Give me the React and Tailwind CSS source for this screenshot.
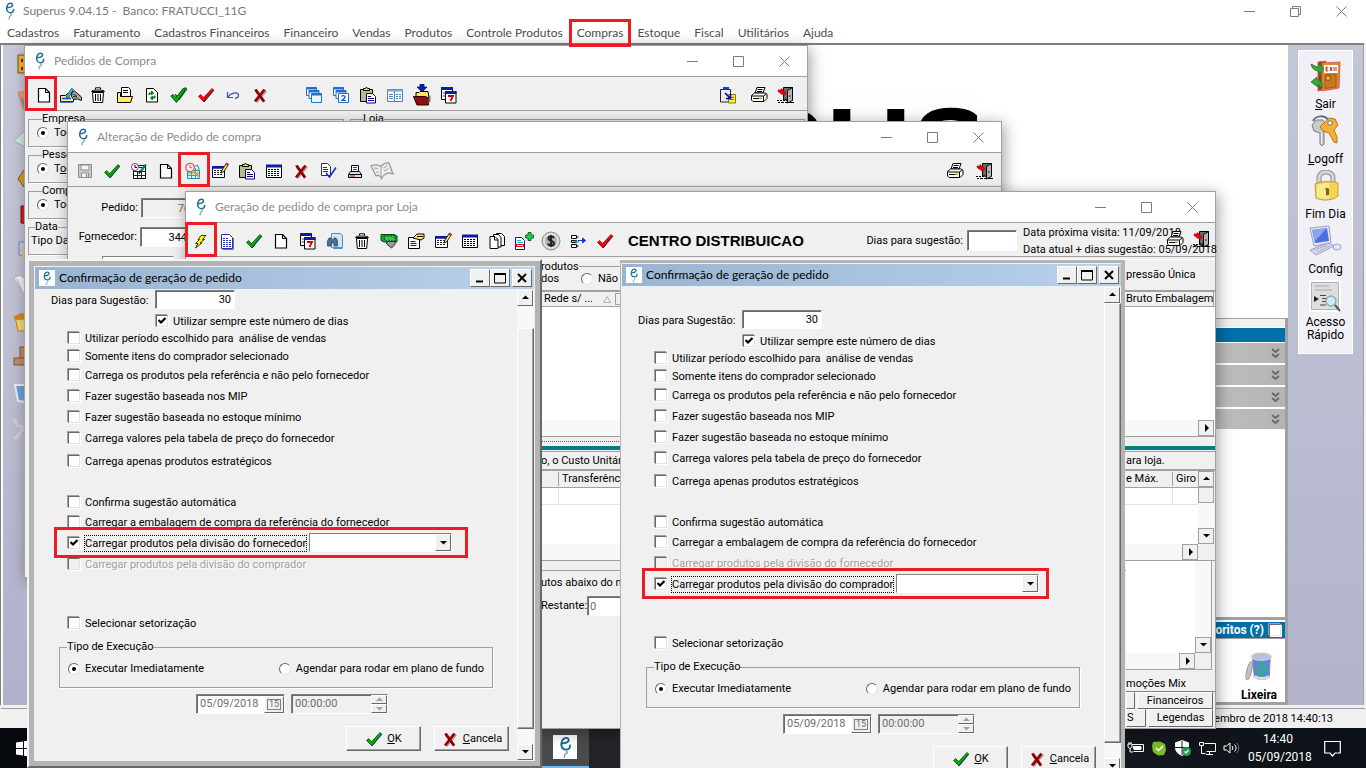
import React from "react";

/* ---------- small drawings ---------- */

function Svg({ w = 18, h = 18, vb = "0 0 18 18", children, className = "" }) {
  return (
    <svg width={w} height={h} viewBox={vb} fill="none" className={"shrink-0 " + className} aria-hidden="true">
      {children}
    </svg>
  );
}

function Logo({ w = 12, h = 18 }) {
  return (
    <Svg w={w} h={h} vb="0 0 12 18">
      <path d="M3 5.500C6 6 9 4.500 8.500 2.600 8 .8 4.500.8 3.300 3.500 2 6.500 2.600 10.400 6 10.700 8.600 10.900 10 9 9.600 6.800" stroke="#1b6d91" strokeWidth="1.500" />
      <path d="M6.500 12C8.300 12.800 7 13.800 5.800 14.200 4.500 15 6 15.800 4.800 17.300" stroke="#5aa5c4" strokeWidth="1.100" />
    </Svg>
  );
}

const pagePath = "M3.500 2.500h7l4 4v9.500h-11z";

const icons = {
  page: (
    <Svg>
      <path d={pagePath} fill="#fff" stroke="#000" strokeWidth="1.200" />
      <path d="M10.500 2.500v4h4" stroke="#000" />
    </Svg>
  ),
  hand: (
    <Svg w={24} vb="0 0 24 18">
      <path d="M1.500 9.500h5l2-2h6v8h-13z" fill="#fff27a" stroke="#000" />
      <path d="M1 16h13M3 12.500h9" stroke="#1f3fd0" strokeWidth="1.500" />
      <path d="M7 11L12.500 2.500l2 1L9.500 12z" fill="#35c6c6" stroke="#00457a" strokeWidth=".8" />
      <path d="M13 6l2.500-1 7 6v3.500l-4-1.500-4 .5-2-3z" fill="#a8a8a8" stroke="#000" strokeWidth=".9" />
      <path d="M14.500 8l3.500 2.500M14 10.500l4 .5" stroke="#000" strokeWidth=".8" />
    </Svg>
  ),
  trash: (
    <Svg>
      <path d="M6.500 3.500V1.800h5v1.700M2.500 5.500c0-2 13-2 13 0z" fill="#fff" stroke="#000" />
      <path d="M3.500 6.500h11l-.8 10H4.300z" fill="#fff" stroke="#000" />
      <path d="M6.500 8v7M9 8v7M11.500 8v7" stroke="#000" />
    </Svg>
  ),
  folder: (
    <Svg>
      <path d="M5.500 1.500h7l2 2v9h-9z" fill="#fff" stroke="#000" />
      <path d="M7 4.500h5M7 6.500h5" stroke="#000" />
      <path d="M1.500 16.500v-10h3v4h12l-2 6z" fill="#ffef63" stroke="#000" />
    </Svg>
  ),
  refresh: (
    <Svg>
      <path d={pagePath} fill="#fff" stroke="#000" />
      <path d="M6 9V7h3.500M8.500 5l2 2-2 2zM12 9.500v2.500H8.500M9.500 10l-2 2 2 2z" stroke="#00801a" fill="#00801a" />
    </Svg>
  ),
  greenDouble: (
    <Svg>
      <path d="M5 8l3 3 7-9.500 2 1.500L9 14z" fill="#0db30d" stroke="#02590c" />
      <path d="M.8 10l2.200-1.500 3 3L13.500 2l1.500 2L6.500 16.500z" fill="#12a512" stroke="#02590c" />
    </Svg>
  ),
  green: (
    <Svg>
      <path d="M1.500 10.500l2-2 3.200 3L15 2.500 16.500 4 7 16z" fill="#0aa50a" stroke="#035a0c" strokeWidth=".8" />
      <path d="M7 16L17 4" stroke="#083a5b" />
    </Svg>
  ),
  red: (
    <Svg>
      <path d="M1.500 10.500l2-2 3.200 3L15 2.500 16.500 4 7 16z" fill="#ee0606" stroke="#b00000" strokeWidth=".8" />
      <path d="M7 16L17 4" stroke="#1b1b6b" />
    </Svg>
  ),
  undo: (
    <Svg>
      <path d="M3.500 6v5.500H9M4 11C6 7.500 14 5 14.500 9c.2 2-1.500 3-3.500 3.500" stroke="#3c4cc4" strokeWidth="1.200" />
    </Svg>
  ),
  x: (
    <Svg>
      <path d="M5 5l8.500 11M15 4.500L5.500 16" stroke="#a0a0a0" strokeWidth="2.500" />
      <path d="M4.500 3.500l8.500 12M13.500 3.500L4 15.500" stroke="#a40000" strokeWidth="2.800" />
      <path d="M4 3.500l8 11.500" stroke="#520000" strokeWidth=".8" />
    </Svg>
  ),
  stack: (
    <Svg>
      <path d="M1.500 1.500h10v8h-10z" fill="#fff" stroke="#1d6fd0" />
      <path d="M1.500 2.500h10" stroke="#1d6fd0" strokeWidth="2" />
      <path d="M4 4.500h10v8H4z" fill="#fff" stroke="#1d6fd0" />
      <path d="M4 5.500h10" stroke="#1d6fd0" strokeWidth="2" />
      <path d="M6.500 7.500h10v9h-10z" fill="#e8f4ff" stroke="#1d6fd0" />
      <path d="M6.500 8.500h10" stroke="#1d6fd0" strokeWidth="2" />
    </Svg>
  ),
  stack2: (
    <Svg>
      <path d="M1.500 1.500h10v8h-10z" fill="#fff" stroke="#1d6fd0" />
      <path d="M1.500 2.500h10" stroke="#1d6fd0" strokeWidth="2" />
      <path d="M4 4.500h10v8H4z" fill="#fff" stroke="#1d6fd0" />
      <path d="M4 5.500h10" stroke="#1d6fd0" strokeWidth="2" />
      <path d="M6.500 7.500h10v9h-10z" fill="#fff" stroke="#1d6fd0" />
      <path d="M9.500 10.500c1-1.500 4-.8 3.500 1-.3 1-2.500 1.800-3.200 3H14" stroke="#1450a8" strokeWidth="1.200" />
    </Svg>
  ),
  paste: (
    <Svg>
      <path d="M1.500 3.500h12v12h-12z" fill="#b9b98f" stroke="#000" />
      <path d="M4.500 4.500v-2h2l1-1.500 1 1.500h2v2z" fill="#f7e85a" stroke="#000" />
      <path d="M7.500 7.500h6l3 3v6.500h-9z" fill="#fff" stroke="#000080" />
      <path d="M9 10.500h3M9 12.500h6M9 14.500h6" stroke="#000080" />
    </Svg>
  ),
  list: (
    <Svg>
      <path d="M1.500 3.500h15v12h-15z" fill="#fff" stroke="#4781c6" />
      <path d="M1.500 4.500h15" stroke="#74a6de" strokeWidth="2" />
      <path d="M8.500 5v10M3 8.500h4M3 10.500h4M3 12.500h4M10 8.500h2M13 8.500h2M10 10.500h2M13 10.500h2M10 12.500h2M13 12.500h2" stroke="#4781c6" />
    </Svg>
  ),
  folderDown: (
    <Svg w={20} h={22} vb="0 0 20 22">
      <path d="M8 0h4v3h3l-5 5-5-5h3z" fill="#0a1fb5" stroke="#00005a" strokeWidth=".7" />
      <path d="M4 8.500h3l1-1h8l1 6H4z" fill="#ffe850" stroke="#000" />
      <path d="M1.500 12.500h12l3 1.500v7H5z" fill="#8d0f0f" stroke="#2b0000" />
      <path d="M16.500 13l2-2v6l-2 3z" fill="#777" />
    </Svg>
  ),
  calendar: (
    <Svg>
      <path d="M1.500 1.500h11v12h-11z" fill="#fff" stroke="#000" />
      <path d="M1 2.500h12" stroke="#0a1fa0" strokeWidth="3" />
      <path d="M3 7h2M3 10h2" stroke="#d00000" />
      <path d="M5.500 5.500h10.500v11.500H5.500z" fill="#fff" stroke="#000" />
      <path d="M5 6.500h11.500" stroke="#0a1fa0" strokeWidth="3" />
      <path d="M8 10h5l-2.500 5" stroke="#d00000" strokeWidth="1.800" />
    </Svg>
  ),
  copyNote: (
    <Svg>
      <path d="M1.500 3.500h10v12.500h-10z" fill="#eee" stroke="#222" />
      <path d="M4 3.500h6V1H4z" fill="#1a3de0" />
      <path d="M9.500 8.500h7v8.500h-7z" fill="#ffef3d" stroke="#8a7c00" />
      <path d="M11 11.500h4M11 13.500h4" stroke="#8a7c00" />
      <path d="M6 7l5 5M11.500 8v4.500H7" stroke="#0000a8" strokeWidth="1.500" />
    </Svg>
  ),
  printer: (
    <Svg>
      <path d="M5 7l2-5.500h8L13 7z" fill="#fff" stroke="#000" />
      <path d="M7.500 3.500h5M7 5.500h5" stroke="#000" />
      <path d="M1.500 9.500L4.500 7h11l1.500 1.500v4L14 15.500H3l-1.500-1.500z" fill="#fff" stroke="#000" />
      <path d="M1.500 10h12v5M3 12.500h9M13.500 10l3-2" stroke="#000" />
      <path d="M9 12h3" stroke="#e6dc00" strokeWidth="1.500" />
    </Svg>
  ),
  exit: (
    <Svg>
      <path d="M6.500 1.500h9v12.500h-9z" fill="#6b6b6b" stroke="#000" />
      <path d="M10.500 4.500l5-3v13l-5 2.500z" fill="#b5b5b5" stroke="#000" />
      <path d="M12 10h1.500" stroke="#000" />
      <path d="M1 4h3V2.500L9 6.500l-2 3L1.500 6z" fill="#f00000" stroke="#8a0000" strokeWidth=".6" />
      <path d="M0 14.500h2m1 0h2m1 0h2m1 0h2M1 16.500h2m1 0h3m1 0h9" stroke="#000" strokeWidth="1.200" />
    </Svg>
  ),
  floppy: (
    <Svg>
      <path d="M2.500 2.500h13v13h-13z" fill="#c9c9c9" stroke="#8d8d8d" />
      <path d="M5 3h8v5H5zM5.500 11h7v4.500h-7z" fill="#f6f6f6" stroke="#8d8d8d" />
      <path d="M10.500 12v3" stroke="#8d8d8d" strokeWidth="1.500" />
    </Svg>
  ),
  chartEdit: (
    <Svg>
      <path d="M3.500 3.500h12v13h-12z" fill="#fff" stroke="#000" />
      <path d="M4 9.500h11M4 13.500h11M7.500 9v7M11.500 9v7M9 5.500h6" stroke="#222" />
      <circle cx="5" cy="5" r="3.500" fill="#fff" stroke="#7a3aa0" />
      <path d="M5 3v2.500h2" stroke="#000" />
      <path d="M16 2.500L10 10" stroke="#00807f" strokeWidth="2.200" />
      <path d="M10.500 9L9 11.500" stroke="#000" strokeWidth="1.500" />
    </Svg>
  ),
  zoomGrid: (
    <Svg>
      <path d="M3.500 8.500h12v8h-12zM10.500 4.500l3-1.500 2 5.500" fill="#dff3ff" stroke="#2288c8" />
      <path d="M3.500 11h12M3.500 13.500h12M7.500 8.500v8M11.500 6v10.500" stroke="#2fb35d" />
      <circle cx="6" cy="5.500" r="4.200" fill="#fdeeee" stroke="#dd5959" strokeWidth="1.300" />
      <path d="M6 3.200v2.500h2" stroke="#dd5959" />
      <path d="M9.500 9.500l6 5.500" stroke="#f29a2e" strokeWidth="2" />
    </Svg>
  ),
  gridPencil: (
    <Svg>
      <path d="M1.500 4.500h12v11h-12z" fill="#fff" stroke="#00007a" />
      <path d="M1 5.500h13" stroke="#0a1fa0" strokeWidth="2.500" />
      <path d="M3 8.500h9M3 10.500h9M3 12.500h9" stroke="#222" strokeDasharray="2 1" />
      <path d="M10 11l1-3 4.500-7 2 1.500L13 9.500z" fill="#ffe23b" stroke="#000" strokeWidth=".8" />
      <path d="M15 1.500l2 1.500" stroke="#e01060" strokeWidth="2" />
    </Svg>
  ),
  grid: (
    <Svg>
      <path d="M1.500 3.500h15v12h-15z" fill="#fff" stroke="#000" />
      <path d="M1 4h16" stroke="#0a1fa0" strokeWidth="3" />
      <path d="M3 7.500h12M3 9.500h12M3 11.500h12M3 13.500h12" stroke="#000" strokeDasharray="2 1" />
    </Svg>
  ),
  docCheck: (
    <Svg>
      <path d="M2.500 1.500h6l3 3v9h-9z" fill="#fff" stroke="#333" />
      <path d="M4 5.500h4M4 7.500h5M4 9.500h5" stroke="#333" />
      <path d="M7 11l3.500 4L17 5.500" stroke="#1026d8" strokeWidth="1.500" />
    </Svg>
  ),
  printerBlue: (
    <Svg>
      <path d="M5.500 3.500h7v6h-7z" fill="#fff" stroke="#000" />
      <path d="M7 5.500h4M7 7.500h4" stroke="#1a3de0" />
      <path d="M4.500 9.500h9l2 3h-13z" fill="#ddd" stroke="#000" />
      <path d="M2.500 12.500h13v3h-13z" fill="#e1e1e1" stroke="#000" />
      <path d="M4 14h5" stroke="#c00" />
    </Svg>
  ),
  book: (
    <Svg w={24} h={20} vb="0 0 24 20">
      <path d="M1 5l5 10c2-1 4-1 5.500 2.500C14 13 18 11 23 13L19 2c-3-.5-6 1-8 3.500C9 4 4 3 1 5z" fill="#ececec" stroke="#9a9a9a" strokeWidth="1.300" />
      <path d="M11 5.500V17M13.500 7l4-2.500M14 10l4.500-2.500M4 7l4 .5M6 11l3 .5" stroke="#a6a6a6" />
    </Svg>
  ),
  bolt: (
    <Svg>
      <path d="M10 3.500h5L11.500 7.500h2L9 11h2l-6.500 5 2.500-4.500H4.500L8.500 7.500H7z" fill="#fff200" stroke="#2a2500" strokeWidth=".9" />
    </Svg>
  ),
  docBlue: (
    <Svg>
      <path d="M3.500 2.500h8l3 3v11h-11z" fill="#fff" stroke="#1f2fd0" />
      <path d="M5 6.500h5M5 8.500h8M5 10.500h8M5 12.500h8M5 14.500h8" stroke="#1f2fd0" strokeDasharray="2 1" />
      <path d="M15.500 6v11.500h-11" stroke="#777" />
    </Svg>
  ),
  binoc: (
    <Svg>
      <path d="M5.500 1.500h9l2 2v12h-11z" fill="#cfe6fa" stroke="#4c8ed0" />
      <path d="M7 15.500h9.500v1.500H7z" fill="#4c8ed0" />
      <path d="M1.500 14V9L3 6h2l1 2h1l1-2h2l1.500 3v5H8v-3H5v3z" fill="#4a6f92" stroke="#2b4a68" strokeWidth=".8" />
    </Svg>
  ),
  money: (
    <Svg>
      <path d="M1 2.500h13l3 1.500v6H4L1 8.500z" fill="#1e9e35" stroke="#064d14" />
      <path d="M4 4h11v5H5z" fill="#38c352" stroke="#064d14" strokeDasharray="2 1" />
      <path d="M7 9.500h8v3l-3.500 3.500-5-4z" fill="#9a9a9a" stroke="#333" />
    </Svg>
  ),
  noteHand: (
    <Svg>
      <path d="M1.500 5.500h11v11h-11z" fill="#fff" stroke="#000" />
      <path d="M3.500 9.500h5M3.500 11.500h6M3.500 13.500h6" stroke="#0a1fa0" />
      <path d="M6 6l4-4h7v4l-3 2-4-1z" fill="#ffed6a" stroke="#000" />
      <path d="M10 4.500h6" stroke="#000" />
    </Svg>
  ),
  pages: (
    <Svg>
      <path d="M8.500 1.500h5l3 3v9h-8z" fill="#fff" stroke="#000" />
      <path d="M5.500 2.500h5l2.500 3v9.500H5.500z" fill="#fff" stroke="#000" />
      <path d="M2 4.500h5l3 3v9H2z" fill="#fff" stroke="#000" />
      <path d="M6.500 4.500v3.500H10" stroke="#000" />
    </Svg>
  ),
  docAdd: (
    <Svg w={20} vb="0 0 20 18">
      <path d="M1.500 5.500h6l3 3v9h-9z" fill="#fff" stroke="#0a1fa0" />
      <path d="M3 8.500h4M3 10.500h6" stroke="#1ab5d8" strokeWidth="1.200" />
      <path d="M2 12h8v3H2z" fill="#e01010" />
      <path d="M3 13.500h6" stroke="#fff" />
      <path d="M14 0.500h3v2.500h2.500v3H17v2.500h-3V6h-2.500V3H14z" fill="#1cd050" stroke="#064d14" strokeWidth=".8" />
    </Svg>
  ),
  dollar: (
    <Svg w={20} h={20} vb="0 0 20 20">
      <circle cx="10" cy="10" r="9" fill="#d4d4d4" stroke="#8a8a8a" />
      <circle cx="10" cy="10" r="6.800" fill="#b3b3b3" stroke="#eee" />
      <path d="M13 7C12 4.800 7.500 5 7.500 7.500c0 3 5.500 2 5.500 5C13 15 8 15.500 7 12.500M10 4v12" stroke="#222" strokeWidth="2" />
    </Svg>
  ),
  flow: (
    <Svg>
      <path d="M2.500 3.500h5v3h-5zM2.500 8.500h5v2h-5zM2.500 12.500h5v3h-5z" fill="#fff" stroke="#000" />
      <path d="M7.500 5h2M7.500 14h2" stroke="#000" />
      <path d="M4 9.500h6" stroke="#1ab5d8" strokeWidth="1.500" />
      <path d="M9 8.500h7M13.500 6l3 2.500-3 2.500z" stroke="#1a2fe0" fill="#1a2fe0" strokeWidth="1" />
    </Svg>
  ),
};

/* ---------- shared controls ---------- */

const uiFont = "font-['Lato','Noto_Sans',sans-serif]";
const sunken = "border border-t-[#808080] border-l-[#808080] border-r-white border-b-white";
const raised = "border border-t-white border-l-white border-r-[#696969] border-b-[#696969] bg-[#f0f0f0]";
const dither = "bg-[#f8f8f8]";

function Mark({ className }) {
  return <span aria-hidden="true" className={"pointer-events-none absolute z-10 border-[3px] border-[#ed1c24] " + className} />;
}

function ToolButton({ name, label, mark }) {
  return (
    <button type="button" aria-label={label} className="relative flex h-7 w-[27px] shrink-0 items-center justify-center">
      {icons[name]}
      {mark && <Mark className={"-top-[5px] h-[35px] w-8 " + mark} />}
    </button>
  );
}

function WindowButtons({ restore }) {
  const s = { stroke: "#7c7c7c", fill: "none" };
  return (
    <div className="flex shrink-0">
      <button type="button" aria-label="Minimizar" className="flex h-7 w-[46px] items-center justify-center">
        <svg width="11" height="11"><path d="M0 5.500h11" {...s} /></svg>
      </button>
      <button type="button" aria-label="Maximizar" className="flex h-7 w-[46px] items-center justify-center">
        <svg width="11" height="11">
          {restore ? <path d="M.5 2.500h8v8h-8zM2.500 2.500v-2h8v8h-2" {...s} /> : <path d="M.5.5h10v10H.5z" {...s} />}
        </svg>
      </button>
      <button type="button" aria-label="Fechar" className="flex h-7 w-[46px] items-center justify-center">
        <svg width="11" height="11"><path d="M.5.5l10 10M10.500.5l-10 10" {...s} /></svg>
      </button>
    </div>
  );
}

function AppWindow({ title, className, children }) {
  return (
    <section className={"absolute flex flex-col border border-[#a0a0a0] bg-[#f0f0f0] shadow-[2px_3px_14px_rgba(0,0,0,0.38)] " + className}>
      <header className="flex h-[30px] shrink-0 items-center bg-white pl-[9px]">
        <Logo />
        <h2 className={"ml-2 flex-1 text-xs text-[#8c8c8c] " + uiFont}>{title}</h2>
        <WindowButtons />
      </header>
      {children}
    </section>
  );
}

function Toolbar({ className = "", children }) {
  return (
    <div className={"relative flex h-[35px] shrink-0 items-center border-y border-[#a0a0a0] pt-0.5 " + className}>{children}</div>
  );
}

function Check({ checked, disabled, id }) {
  return (
    <span className="relative flex size-3 shrink-0">
      <input
        id={id}
        type="checkbox"
        defaultChecked={checked}
        disabled={disabled}
        className={"peer size-3 appearance-none border border-t-[#696969] border-l-[#696969] border-r-[#e3e3e3] border-b-[#e3e3e3] shadow-[1px_1px_0_#fff,-1px_-1px_0_#a0a0a0] " + (disabled ? "bg-[#f0f0f0]" : "bg-white")}
      />
      <svg className="pointer-events-none absolute left-0.5 top-0.5 hidden peer-checked:block" width="9" height="9" viewBox="0 0 9 9">
        <path d="M.5 3L3 5.500 7.500 1" stroke="#000" strokeWidth="2.200" fill="none" />
      </svg>
    </span>
  );
}

function Radio({ name, checked, children, className = "" }) {
  return (
    <label className={"flex items-center " + className}>
      <span className="relative flex size-3 shrink-0">
        <input
          type="radio"
          name={name}
          defaultChecked={checked}
          className="peer size-3 appearance-none rounded-full border border-t-[#696969] border-l-[#696969] border-r-[#e3e3e3] border-b-[#e3e3e3] bg-white"
        />
        <span className="pointer-events-none absolute left-1 top-1 hidden size-1 rounded-full bg-black peer-checked:block" />
      </span>
      <span className="whitespace-nowrap pl-[5px]">{children}</span>
    </label>
  );
}

function Arrow({ dir, gray }) {
  const d = { up: "M1 5h7L4.500 1.500z", down: "M1 2h7L4.500 5.500z", right: "M3 0v8l4-4z" }[dir];
  return (
    <svg width="9" height="8" viewBox="0 0 9 8" aria-hidden="true">
      <path d={d} fill={gray ? "#a0a0a0" : "#000"} />
    </svg>
  );
}

function ScrollButton({ dir, flat }) {
  return (
    <button type="button" aria-label={dir} className={"flex size-4 shrink-0 items-center justify-center " + (flat ? "border border-[#a0a0a0] bg-[#f0f0f0]" : raised)}>
      <Arrow dir={dir} />
    </button>
  );
}

/* ---------- confirmation dialog ---------- */

const options = [
  { text: "Utilizar período escolhido para\u00a0 análise de vendas", gap: "" },
  { text: "Somente itens do comprador selecionado", gap: "" },
  { text: "Carrega os produtos pela referência e não pelo fornecedor", gap: "mt-px" },
  { text: "Fazer sugestão baseada nos MIP", gap: "mt-[3px]" },
  { text: "Fazer sugestão baseada no estoque mínimo", gap: "mt-[3px]" },
  { text: "Carrega valores pela tabela de preço do fornecedor", gap: "mt-[3px]" },
  { text: "Carrega apenas produtos estratégicos", gap: "mt-[5px]" },
  { text: "Confirma sugestão automática", gap: "mt-[23px]" },
  { text: "Carregar a embalagem de compra da referência do fornecedor", gap: "mt-[2px]" },
  { key: "fornecedor", text: "Carregar produtos pela divisão do fornecedor", gap: "mt-[3px]" },
  { key: "comprador", text: "Carregar produtos pela divisão do comprador", gap: "mt-[3px]" },
  { text: "Selecionar setorização", gap: "mt-[41px]" },
];

function OptionRow({ id, option, selected, mark }) {
  const active = option.key === selected && !!option.key;
  const disabled = !!option.key && !active;
  return (
    <div className={"relative flex h-[18px] items-center pl-[33px] " + option.gap}>
      <Check id={id} checked={active} disabled={disabled} />
      <label
        htmlFor={id}
        className={
          "ml-1 whitespace-nowrap pt-px leading-[14px] " +
          (active ? "border border-dotted border-black" : "border border-transparent") +
          (disabled ? " text-[#a0a0a0] [text-shadow:1px_1px_0_#fff]" : "")
        }
      >
        {option.text}
      </label>
      {active && (
        <>
          <span className="absolute left-[274px] -top-px flex">
            <select aria-label={option.text} className={"h-[19px] w-[143px] appearance-none bg-white " + sunken}>
              <option></option>
            </select>
            <span className={"pointer-events-none absolute right-px top-px flex h-[17px] w-4 items-center justify-center " + raised}>
              <Arrow dir="down" />
            </span>
          </span>
          <Mark className={"-top-[7px] h-[31px] " + mark} />
        </>
      )}
    </div>
  );
}

function ConfirmDialog({ prefix, selected, frame, content, body, mark }) {
  return (
    <section role="dialog" aria-label="Confirmação de geração de pedido" className={"absolute flex flex-col bg-[#f0f0f0] " + frame}>
      <header className="flex h-[22px] shrink-0 items-center bg-linear-to-r from-[#99b4d1] to-[#b9d1ea] pl-1 pr-0.5">
        <span className="flex size-4 items-center justify-center bg-white"><Logo w={10} h={15} /></span>
        <h2 className={"ml-1 flex-1 text-xs text-black " + uiFont}>Confirmação de geração de pedido</h2>
        <div className="flex">
          <button type="button" aria-label="Minimizar" className={"flex h-[18px] w-5 items-center justify-center " + raised}>
            <svg width="12" height="10"><path d="M2 8.500h7" stroke="#000" strokeWidth="2" /></svg>
          </button>
          <button type="button" aria-label="Maximizar" className={"flex h-[18px] w-5 items-center justify-center " + raised}>
            <svg width="12" height="11"><path d="M.5 1v9h11V1M0 1h12" stroke="#000" fill="none" /><path d="M0 1h12" stroke="#000" strokeWidth="2" /></svg>
          </button>
          <button type="button" aria-label="Fechar" className={"ml-0.5 flex h-[18px] w-5 items-center justify-center " + raised}>
            <svg width="10" height="10"><path d="M1 1l8 8M9 1L1 9" stroke="#000" strokeWidth="2" /></svg>
          </button>
        </div>
      </header>
      <div className={"flex " + body}>
        <form className={"min-w-0 flex-1 " + content}>
          <div className="flex h-5 items-start pl-4">
            <label htmlFor={prefix + "dias"} className="w-[104px] pt-1 leading-[14px]">Dias para Sugestão:</label>
            <input id={prefix + "dias"} defaultValue="30" className={"h-[19px] w-20 bg-white px-[3px] text-right " + sunken + " shadow-[inset_1px_1px_0_#696969]"} />
          </div>
          <div className="mt-[3px] flex h-4 items-center pl-[121px]">
            <Check id={prefix + "sempre"} checked />
            <label htmlFor={prefix + "sempre"} className="ml-[5px] whitespace-nowrap pt-px">Utilizar sempre este número de dias</label>
          </div>
          {options.map((o, i) => (
            <OptionRow key={o.text} id={prefix + i} option={o} selected={selected} mark={mark} />
          ))}
          <fieldset className="ml-6 mt-2 h-[48px] w-[434px] min-w-0 border border-[#a0a0a0] px-2 shadow-[1px_1px_0_#fff]">
            <legend className="-ml-px leading-[14px]">Tipo de Execução</legend>
            <div className="flex pt-2">
              <Radio name={prefix + "exec"} checked className="w-[212px]">Executar Imediatamente</Radio>
              <Radio name={prefix + "exec"}>Agendar para rodar em plano de fundo</Radio>
            </div>
          </fieldset>
          <div className="mt-[6px] flex gap-1.5 pl-[161px]">
            <span className={"flex h-5 w-[89px] items-center bg-white " + sunken + " shadow-[inset_1px_1px_0_#696969]"}>
              <input aria-label="Data" disabled defaultValue="05/09/2018" className="min-w-0 flex-1 bg-transparent pl-[3px] text-[#6d6d6d]" />
              <button type="button" aria-label="Calendário" className={"flex h-[17px] w-5 items-center justify-center " + raised}>
                <span className="border border-[#808080] px-px text-[9px] leading-[9px] text-[#6d6d6d]">15</span>
              </button>
            </span>
            <span className={"flex h-5 w-[97px] items-center " + sunken + " shadow-[inset_1px_1px_0_#696969]"}>
              <input aria-label="Hora" disabled defaultValue="00:00:00" className="min-w-0 flex-1 bg-transparent pl-[3px] text-[#6d6d6d]" />
              <span className="flex w-4 flex-col">
                <button type="button" aria-label="Aumentar" className={"flex h-[9px] items-center justify-center " + raised}><Arrow dir="up" gray /></button>
                <button type="button" aria-label="Diminuir" className={"flex h-[9px] items-center justify-center " + raised}><Arrow dir="down" gray /></button>
              </span>
            </span>
          </div>
          <div className="mt-3 flex gap-[13px] pl-[311px]">
            <button type="button" className={"flex h-[25px] w-[75px] items-center justify-center gap-1 " + raised + " shadow-[inset_-1px_-1px_0_#a0a0a0]"}>
              {icons.green}<span><u>O</u>K</span>
            </button>
            <button type="button" className={"flex h-[25px] w-[75px] items-center justify-center gap-1 " + raised + " shadow-[inset_-1px_-1px_0_#a0a0a0]"}>
              {icons.x}<span><u>C</u>ancela</span>
            </button>
          </div>
        </form>
        <div className={"flex w-[17px] shrink-0 flex-col " + dither}>
          <ScrollButton dir="up" />
          {selected === "fornecedor" && <div className="h-[22px]" />}
          <div className={"flex-1 " + raised + " shadow-[inset_-1px_-1px_0_#a0a0a0]"} />
          <div className="h-[15px]" />
          <ScrollButton dir="down" />
        </div>
      </div>
    </section>
  );
}

/* ---------- windows ---------- */

function OrdersWindow() {
  const left = ["page", "hand", "trash", "folder", "refresh", "greenDouble", "red", "undo", "x"];
  const right = ["stack", "stack2", "paste", "list", "folderDown", "calendar"];
  const box = "border border-[#a0a0a0] shadow-[1px_1px_0_#fff]";
  return (
    <AppWindow title="Pedidos de Compra" className="left-6 top-[45px] h-[533px] w-[784px]">
      <Toolbar className="pl-[5px] pr-2">
        {left.map((n, i) => <ToolButton key={n} name={n} label={n} mark={i === 0 && "-left-[5px]"} />)}
        <div className="w-[27px] shrink-0" />
        {right.map((n) => <ToolButton key={n} name={n} label={n} />)}
        <div className="flex-1" />
        <ToolButton name="copyNote" label="copiar" />
        <div className="w-1" />
        <ToolButton name="printer" label="imprimir" />
        <ToolButton name="exit" label="sair" />
      </Toolbar>
      <div className="flex gap-1.5 pl-[3px] pr-0.5 pt-px">
        <div className="w-[316px] shrink-0">
          <fieldset className={"h-[35px] px-2 " + box}>
            <legend className="ml-[5px] leading-[14px]">Empresa</legend>
            <Radio name="emp" checked>Todas</Radio>
          </fieldset>
          <fieldset className={"mt-px h-[35px] px-2 " + box}>
            <legend className="ml-[5px] leading-[14px]">Pessoa</legend>
            <Radio name="pes" checked>T<u>o</u>das</Radio>
          </fieldset>
          <fieldset className={"mt-px h-[35px] px-2 " + box}>
            <legend className="ml-[5px] leading-[14px]">Comprador</legend>
            <Radio name="com" checked>Todos</Radio>
          </fieldset>
          <fieldset className={"mt-px h-[35px] px-0.5 " + box}>
            <legend className="ml-1 leading-[14px]">Data</legend>
            <span>Tipo Data</span>
          </fieldset>
        </div>
        <fieldset className={"h-[35px] flex-1 " + box}>
          <legend className="ml-3 leading-[14px]">Loja</legend>
        </fieldset>
      </div>
    </AppWindow>
  );
}

function EditWindow() {
  const tools = ["floppy", "green", "chartEdit", "page", "zoomGrid", "gridPencil", "paste", "grid", "x", "docCheck", "printerBlue", "book"];
  return (
    <AppWindow title="Alteração de Pedido de compra" className="left-[67px] top-[121px] h-[440px] w-[935px]">
      <Toolbar className="pl-[3px] pr-[3px]">
        {tools.map((n) => <ToolButton key={n} name={n} label={n} mark={n === "zoomGrid" && "-left-px"} />)}
        <div className="flex-1" />
        <ToolButton name="printer" label="imprimir" />
        <div className="w-[3px]" />
        <ToolButton name="exit" label="sair" />
      </Toolbar>
      <div className="flex flex-col gap-[9px] pt-[11px]">
        <div className="flex items-center">
          <label htmlFor="pedido" className="w-[70px] text-right">Pedido:</label>
          <input id="pedido" defaultValue="76" className={"ml-[3px] h-5 w-[50px] bg-[#f0f0f0] text-right text-[#6d6d6d] " + sunken + " shadow-[inset_1px_1px_0_#696969]"} />
        </div>
        <div className="flex items-center">
          <label htmlFor="forn" className="w-[69px] text-right">F<u>o</u>rnecedor:</label>
          <input id="forn" defaultValue="344" className={"ml-[3px] h-5 w-12 bg-white text-right " + sunken + " shadow-[inset_1px_1px_0_#696969]"} />
        </div>
        <input aria-label="Código" className={"ml-[34px] h-5 w-[72px] bg-white " + sunken} />
      </div>
    </AppWindow>
  );
}

function StoreWindow() {
  const tools = ["bolt", "docBlue", "green", "page", "calendar", "binoc", "trash", "money", "noteHand", "gridPencil", "grid", "pages", "docAdd", "dollar", "flow", "red"];
  const th = "h-[17px] items-center border-b border-[#a0a0a0]";
  return (
    <AppWindow title="Geração de pedido de compra por Loja" className="left-[185px] top-[191px] h-[538px] w-[1031px]">
      <Toolbar>
        {tools.map((n) => <ToolButton key={n} name={n} label={n} mark={n === "bolt" && "-left-px"} />)}
        <strong className="ml-[10px] flex-1 whitespace-nowrap font-['Liberation_Sans',sans-serif] text-[15px]">CENTRO DISTRIBUICAO</strong>
        <label htmlFor="sug" className="whitespace-nowrap">Dias para sugestão:</label>
        <input id="sug" className={"ml-1 h-[21px] w-[50px] bg-white " + sunken + " shadow-[inset_1px_1px_0_#696969]"} />
        <div className="ml-1.5 w-48 whitespace-nowrap leading-[17px]">
          <p>Data próxima visita: 11/09/2018</p>
          <p>Data atual + dias sugestão: 05/09/2018</p>
        </div>
        <div className="absolute right-0 top-0.5 flex">
          <ToolButton name="printer" label="imprimir" />
          <ToolButton name="exit" label="sair" />
        </div>
      </Toolbar>

      <div className="mt-0.5 flex h-[31px] shrink-0 items-center justify-between border-t border-white pl-[355px]">
        <fieldset className="h-[28px] w-[110px] border-t border-[#a0a0a0]">
          <legend className="leading-[11px]">rodutos</legend>
          <div className="flex"><span className="w-10">dos</span><Radio name="prod">Não</Radio></div>
        </fieldset>
        <span className="w-[89px]">pressão Única</span>
      </div>

      <div className={"flex shrink-0 border-t-2 border-t-[#a0a0a0] pl-[358px] " + th}>
        <span className="w-[59px]">Rede s/ ...</span>
        <svg width="8" height="7"><path d="M.5 6.500L4 .5l3.500 6z" fill="none" stroke="#b0b0b0" /></svg>
        <span className="ml-1 h-3 w-4 border border-[#a0a0a0]" />
        <span className="flex-1" />
        <span className="w-[88px] whitespace-nowrap border-r border-[#a0a0a0]">Bruto Embalagem</span>
        <span className="w-px" />
      </div>
      <div className="h-[113px] shrink-0 bg-white" />
      <div className={"flex shrink-0 justify-end border-b border-[#a0a0a0] pr-px " + dither}><ScrollButton dir="right" flat /></div>
      <div className="h-[9px] shrink-0 pt-1"><div className="ml-[355px] w-20 border-t border-dotted border-[#1f7ac0]" /></div>
      <div className="h-[4px] shrink-0 bg-[#008080]" />
      <div className="mt-px flex h-[18px] shrink-0 items-center justify-between border-t border-[#a0a0a0] pl-[355px] pt-px">
        <span>o, o Custo Unitário</span>
        <span className="w-[89px]">ara loja.</span>
      </div>

      <div className="flex h-[92px] shrink-0 border-b border-t-2 border-[#a0a0a0]">
        <div className="flex min-w-0 flex-1 flex-col">
          <div className={"flex shrink-0 " + th}>
            <span className="ml-[372px] border-l border-[#a0a0a0] pl-[3px]">Transferência</span>
            <span className="flex-1" />
            <span className="w-[46px]">e Máx.</span>
            <span className="w-[26px] border-l border-[#a0a0a0] pl-[3px]">Giro</span>
          </div>
          <div className="flex h-[17px] shrink-0 justify-between border-b border-[#e3e3e3] bg-white">
            <span className="w-[373px] border-r border-[#e3e3e3]" />
            <span className="w-[26px] border-l border-[#e3e3e3]" />
          </div>
          <div className="flex-1 bg-white" />
          <div className={"flex justify-end " + dither}><ScrollButton dir="right" flat /></div>
        </div>
        <div className={"mr-px flex w-4 flex-col " + dither}>
          <ScrollButton dir="up" flat />
          <div className="h-4 border border-[#a0a0a0] bg-[#f0f0f0]" />
          <div className="flex-1" />
          <ScrollButton dir="down" flat />
          <div className="h-4 bg-[#f0f0f0]" />
        </div>
      </div>

      <div className="flex min-h-0 flex-1">
        <div className="flex-1 pt-[9px]">
          <div className="border-t border-[#a0a0a0] pl-[355px] pt-[5px]">
            <p className="leading-[14px]">utos abaixo do mínimo</p>
            <div className="mt-1.5 flex items-center">
              <label htmlFor="rest" className="w-11">Restante:</label>
              <input id="rest" defaultValue="0" className={"ml-0.5 h-5 w-20 bg-white pl-0.5 text-[#6d6d6d] " + sunken + " shadow-[inset_1px_1px_0_#696969]"} />
            </div>
          </div>
        </div>
        <div className="w-[89px]">
          <div className="mr-[3px] flex h-[109px] border-b border-r border-[#a0a0a0]">
            <div className="flex flex-1 flex-col">
              <div className="flex-1 bg-white" />
              <div className={"flex justify-end " + dither}><ScrollButton dir="right" flat /></div>
            </div>
            <div className={"flex w-4 flex-col justify-end " + dither}>
              <ScrollButton dir="down" flat />
              <div className="h-4 bg-[#f0f0f0]" />
            </div>
          </div>
          <p className="flex h-[22px] items-center border-b border-[#808080] pt-1.5">moções Mix</p>
          <div className="flex h-[17px] gap-0.5 pr-0.5">
            <span className={"w-[9px] " + raised} />
            <button type="button" className={"flex-1 leading-[13px] " + raised}>Financeiros</button>
          </div>
          <div className="flex h-[18px] gap-0.5 pr-0.5">
            <button type="button" className={"w-5 text-left " + raised}>S</button>
            <button type="button" className={"flex-1 " + raised}>Legendas</button>
          </div>
        </div>
      </div>
    </AppWindow>
  );
}

/* ---------- desktop of the main application ---------- */

const menus = ["Cadastros", "Faturamento", "Cadastros Financeiros", "Financeiro", "Vendas", "Produtos", "Controle Produtos", "Compras", "Estoque", "Fiscal", "Utilitários", "Ajuda"];

const shortcuts = [
  {
    name: <><u>S</u>air</>,
    art: (
      <svg width="32" height="32" viewBox="0 0 32 32">
        <path d="M8 2l8-1v28l-8 2z" fill="#7d4a12" stroke="#e0605c" />
        <path d="M12 3l18-1-1 26-17 3z" fill="#d88a2a" stroke="#e0605c" />
        <path d="M15 15l11-1v13l-11 1.500z" fill="#c67a20" stroke="#8f5412" strokeWidth=".8" />
        <path d="M14 5h14v8H14z" fill="#fff" />
        <path d="M16 7v4M16 7h2M16 9h2M16 11h2M20 7l2 4M22 7l-2 4M24 7v4M26 7v4" stroke="#e02020" />
        <circle cx="18" cy="18" r="2.500" fill="#e8a850" stroke="#704010" strokeWidth=".8" />
        <path d="M1 4l6 3 2-1V4l5 5-5 5v-3C5 11 2 9 1 4zM12 28c-2-2-3-4-4-4v3l-7-5 6-5v3c4 0 6 3 5 8z" fill="#3aa53a" stroke="#1c7a28" strokeWidth=".8" />
      </svg>
    ),
  },
  {
    name: <><u>L</u>ogoff</>,
    art: (
      <svg width="32" height="32" viewBox="0 0 32 32" fill="none">
        <path d="M3 6C6 0 15 0 18 5" stroke="#56708c" strokeWidth="2" />
        <path d="M2 10l4-5h7l3 5-2 6v13l-2 2-2-2V18l-6-2z" fill="#cbcbcb" stroke="#7d7d7d" />
        <path d="M11.500 18v11" stroke="#f4f4f4" />
        <path d="M13 9l6-6 6 1 3 6-4 5 3 7v6l-3-1-5-9-6-2-3-4z" fill="#f7b035" stroke="#b87412" />
        <circle cx="20" cy="8" r="2.200" fill="#fff" stroke="#56708c" />
      </svg>
    ),
  },
  {
    name: "Fim Dia",
    art: (
      <svg width="32" height="32" viewBox="0 0 32 32" fill="none">
        <path d="M9 14V8c0-8 14-8 14 0v6" stroke="#8e8e8e" strokeWidth="5" />
        <path d="M9 14V8c0-8 14-8 14 0v6" stroke="#d6d6d6" strokeWidth="3" />
        <path d="M5 14c6-3 16-3 23-1v13c-6 5-16 5-22 2z" fill="#f6d552" stroke="#c29a28" />
        <path d="M7 15c6-2 9-2 12-2v16c-4 0-8 0-12-2z" fill="#fbe98f" />
        <path d="M15 19c1-2 5-1 4 1v5l-3 .5v-5z" fill="#7b611b" />
      </svg>
    ),
  },
  {
    name: "Config",
    art: (
      <svg width="34" height="32" viewBox="0 0 34 32" fill="none">
        <path d="M2 3l19-2 2 17-17 3z" fill="#e4e6f4" stroke="#9ba0c0" />
        <path d="M4 5l15-2 2 13-14 2z" fill="#4a6fe3" />
        <path d="M4 5l15-2-12 13z" fill="#8aa6f3" />
        <path d="M2 25l18-7 6 3-18 9z" fill="#d5d8ec" stroke="#9ba0c0" />
        <path d="M6 25l14-5M9 27l13-6" stroke="#9ba0c0" strokeDasharray="2 1" />
        <ellipse cx="29" cy="22" rx="4" ry="3" fill="#e8e9f5" stroke="#9ba0c0" />
      </svg>
    ),
  },
  {
    name: <>Acesso<br />Rápido</>,
    art: (
      <svg width="32" height="32" viewBox="0 0 32 32" fill="none">
        <path d="M0 0h32v32H0z" fill="#fff" />
        <path d="M2.500 2.500h27v27h-27z" fill="#dedede" stroke="#b2b2b2" />
        <path d="M6 6h14M6 10h17" stroke="#a8a8a8" />
        <path d="M5 16v6l5-3z" fill="#222" />
        <path d="M11 15.500h6M13 18.500h4M13 21.500h4M11 25h6" stroke="#444" />
        <circle cx="22" cy="21" r="5" fill="#cfe9f5" stroke="#86aebe" strokeWidth="1.500" />
        <path d="M26 25l5 6" stroke="#555" strokeWidth="2" />
      </svg>
    ),
  },
];

const stripArt = [
  { gap: "mt-2", art: <><path d="M5 2h18v18H5z" fill="#f3b632" stroke="#6b521b" /><path d="M9 6v3M9 14v3" stroke="#5a2d0c" strokeWidth="2" /></> },
  { gap: "mt-4", art: <><path d="M5 1h14v5l-3 14-6-2z" fill="#e8a274" stroke="#d18a60" /><path d="M9 7l3 10" stroke="#6f93c8" strokeWidth="2" /></> },
  { gap: "mt-4", art: <path d="M1 12l9-9 10 6-6 10z" fill="#cfe6e2" stroke="#8dbcb8" /> },
  { gap: "mt-4", art: <path d="M5 12l6-9 10 2v13l-10 2z" fill="#d99a35" stroke="#7d4f10" /> },
  { gap: "mt-4", art: <path d="M8 1h12v18l-12-1z" fill="#c72a1c" stroke="#7a120b" /> },
  { gap: "mt-3", art: <><path d="M6 3h14v12l-5 4-9-3z" fill="#c6c6ee" stroke="#8484c0" /><path d="M9 10h10v9H9z" fill="#f0c85a" /></> },
  { gap: "mt-3", art: <><path d="M1 5l6-3 5 4 10-4v20l-12-2z" fill="#f1f1f1" stroke="#b2b2b2" /><path d="M4 6l5 12" stroke="#b2b2b2" /></> },
  { gap: "mt-4", art: <><path d="M1 6l6-3 14-1v18H5L3 10z" fill="#f5d876" stroke="#c1820f" /><path d="M1 6l6-3 14-1v6L3 9z" fill="#d8861c" /></> },
  { gap: "mt-3", art: <><path d="M7 2h14v18H1v-7h6z" fill="#c08c64" stroke="#8a5532" /><path d="M7 13h14" stroke="#8a5532" /></> },
  { gap: "mt-4", art: <path d="M2 2h20v18l-17-2z" fill="#6fa0dc" stroke="#e8eef8" strokeWidth="2" /> },
  { gap: "mt-3", art: <path d="M1 2l3 6 5 2 9-2-8 4-8 10M8 10l12 12" fill="none" stroke="#cfcfcf" strokeWidth="3" /> },
];

function Workspace() {
  return (
    <div className="mr-0.5 flex min-h-0 flex-1 border-l border-t-2 border-[#808080]">
      <nav className="w-[60px] shrink-0 border-l-2 border-white bg-linear-to-b from-[#c8cad9] to-[#b0b1c9] pl-[10px]">
        {stripArt.map((s, i) => (
          <svg key={i} width="24" height="22" viewBox="0 0 24 22" className={s.gap} aria-hidden="true">{s.art}</svg>
        ))}
      </nav>
      <div className="flex min-w-0 flex-1 flex-col bg-white">
        <div className="flex h-[274px] shrink-0 justify-end overflow-hidden border-b border-[#a0a0a0] pr-[311px] pt-[50px]">
          <div className="w-[210px] overflow-hidden bg-[#fdfdfd] font-['Liberation_Sans',sans-serif] text-[118px] font-bold leading-[110px] text-black">
            <span className="-ml-[26px]">RUS</span>
          </div>
        </div>
        <div className="flex flex-1 justify-end">
          <aside className="flex w-[300px] flex-col border-r-[3px] border-[#a0a0a0] bg-white">
            <div className="h-2 bg-[#f0f0f0]" />
            <div className="mt-px h-3.5 bg-[#0070a8]" />
            {[0, 1, 2, 3].map((n) => (
              <button key={n} type="button" aria-label={"Painel " + (n + 1)} className="mt-px flex h-[21px] items-center justify-end border-b border-white bg-linear-to-r from-[#dcdcdc] to-[#b4b4b4] pr-[5px]">
                <svg width="9" height="11" viewBox="0 0 9 11" fill="none" stroke="#686868" strokeWidth="1.800">
                  <path d="M1 1l3.500 3L8 1M1 6l3.500 3L8 6" />
                </svg>
              </button>
            ))}
            <div className="flex-1" />
            <div className="mb-0.5 h-[3px] bg-[#a0a0a0]" />
            <label className="flex h-4 items-center justify-end gap-[5px] bg-[#0070a8] pr-1 text-xs font-bold text-white">
              Favoritos (?) <Check id="fav" />
            </label>
            <div className="flex h-16 items-end justify-end border-t border-[#a0a0a0] pr-2">
              <a href="#lixeira" className="flex flex-col items-center gap-1.5 text-xs font-bold leading-[14px] text-black">
                <svg width="30" height="30" viewBox="0 0 30 32" fill="none">
                  <path d="M8 5h19l-1 22c-4 3-12 3-16 0z" fill="#5a86dd" stroke="#8c8c8c" />
                  <ellipse cx="17.500" cy="5" rx="10" ry="3.500" fill="#a9c3ee" stroke="#c7c7c7" strokeWidth="2" />
                  <path d="M10 26c4 3 12 3 16 0" stroke="#dcdcdc" strokeWidth="3" />
                  <path d="M14 18l4-6 4 6-3 5h-3z" stroke="#35b56a" strokeWidth="2.500" />
                  <ellipse cx="4.500" cy="20" rx="2.500" ry="10" transform="rotate(14 4.500 20)" fill="#c2c2c2" stroke="#8c8c8c" />
                </svg>
                Lixeira
              </a>
            </div>
            <div className="h-[3px] bg-[#a0a0a0]" />
          </aside>
        </div>
      </div>
      <aside className="w-[76px] shrink-0 border-r border-[#a0a0a0] bg-linear-to-b from-[#c3c6d5] to-[#b3b4cc] px-[10px] pt-[5px]">
        <div className="flex h-[304px] flex-col items-center gap-[3px] border border-white bg-[#f0f0f6] pt-[9px]">
          {shortcuts.map((s, i) => (
            <button key={i} type="button" className="flex shrink-0 flex-col items-center gap-1 text-center text-xs leading-[13px]">
              {s.art}
              <span className="flex min-h-4 items-center"><span>{s.name}</span></span>
            </button>
          ))}
        </div>
      </aside>
    </div>
  );
}

function Taskbar() {
  return (
    <footer className="flex h-10 shrink-0 items-center bg-linear-to-r from-[#05080c] via-[#26282b] to-[#0b1017] text-white">
      <button type="button" aria-label="Iniciar" className="flex h-10 w-12 items-center pl-4">
        <svg width="17" height="17" viewBox="0 0 17 17" fill="#fff"><path d="M0 2.500L7 1.500V8H0zM8 1.300L17 0v8H8zM0 9h7v6.500l-7-1zM8 9h9v8l-9-1.300z" /></svg>
      </button>
      <div className="flex-1" />
      <button type="button" aria-label="Superus" className="mr-[538px] flex h-10 w-12 items-center justify-center border-b-2 border-[#76b9ed] bg-[#4a4b4d]">
        <span className="flex size-6 items-center justify-center bg-white"><Logo w={15} h={23} /></span>
      </button>
      <div className="flex items-center gap-[7px]">
        <svg width="17" height="16" viewBox="0 0 17 16" fill="none" stroke="#fff"><path d="M3.500 4.500h13v7h-10" /><path d="M6 6.500h8v3H7z" fill="#fff" /><path d="M1 4v2c0 3 4 3 4 0V4zM2 4V2M4 4V2M3 8v4h3" fill="#1a1b1e" /></svg>
        <svg width="16" height="16" viewBox="0 0 16 16"><path d="M2 2l7-.5L14 4l1 6-2 5-6 .5L2 12 1 6z" fill="#7cbb2a" /><path d="M5 8l2.500 2.500L12 6" fill="none" stroke="#fff" strokeWidth="1.500" /></svg>
        <svg width="18" height="17" viewBox="0 0 18 17"><path d="M8 0l7 2.500v5c0 4-3 6.500-7 8.500-4-2-7-4.500-7-8.500v-5z" fill="#fff" /><path d="M8 1v14M1 7.500h14" stroke="#222" /><circle cx="12.500" cy="11.500" r="4.500" fill="#1fa04a" /><path d="M10.500 11.500l1.500 1.500 2.500-3" fill="none" stroke="#fff" strokeWidth="1.200" /></svg>
        <svg width="17" height="16" viewBox="0 0 17 16" fill="none" stroke="#fff"><path d="M5.500 3.500h11v8h-9M7 14.500h7M10.500 11.500v3M.5 2.500h4v3h-4zM2.500 5.500v8h4" /></svg>
        <svg width="17" height="16" viewBox="0 0 17 16" fill="none" stroke="#fff"><path d="M1 6h2.500L7 3v10L3.500 10H1zM9 6c1 1 1 3 0 4M11.500 4.500c2 2 2 5 0 7" /><path d="M13.500 3c3 3 3 7 0 10" stroke="#777" /></svg>
      </div>
      <time className="ml-2 w-[60px] text-center text-xs leading-[18px]">
        14:40<br />05/09/2018
      </time>
      <button type="button" aria-label="Notificações" className="ml-4 mr-[25px]">
        <svg width="17" height="17" viewBox="0 0 17 17" fill="none" stroke="#fff" strokeWidth="1.200"><path d="M.7 1.500h15.600v11.500h-5.300l-2.500 3-2.500-3H.7z" /></svg>
      </button>
    </footer>
  );
}

export default function App() {
  return (
    <div className="relative flex h-screen w-full flex-col overflow-hidden bg-[#f0f0f0] font-['Roboto','Liberation_Sans',sans-serif] text-[11px] leading-[14px] text-black">
      <header className="flex h-[22px] shrink-0 items-center bg-white pl-1 pr-0.5">
        <Logo />
        <h1 className={"ml-[7px] flex-1 text-xs text-[#7a7a7a] " + uiFont}>Superus 9.04.15 -&nbsp; Banco: FRATUCCI_11G</h1>
        <WindowButtons restore />
      </header>
      <nav className={"flex h-[21px] shrink-0 items-center gap-3.5 bg-white pl-[7px] text-xs text-[#4f4f4f] " + uiFont}>
        {menus.map((m) => (
          <button key={m} type="button" className="relative whitespace-nowrap">
            {m}
            {m === "Compras" && <Mark className="-inset-x-2 -inset-y-[6px] z-20" />}
          </button>
        ))}
      </nav>
      <Workspace />
      <div className="mx-px mb-1 mt-[3px] flex h-4 shrink-0 items-center justify-end border-t border-[#a0a0a0] pr-8">
        <span className="pt-1">5 de Setembro de 2018 14:40:13</span>
      </div>
      <Taskbar />

      <OrdersWindow />
      <EditWindow />
      <StoreWindow />
      <ConfirmDialog
        prefix="a"
        selected="fornecedor"
        frame="left-[27px] top-[259px] h-[509px] w-[515px] border-2 border-l-[#f4f4f4] border-t-[#f4f4f4] border-r-[#696969] border-b-[#696969] shadow-[inset_0_0_0_5px_#b4b4b4] p-1.5"
        body="min-h-0 flex-1 pt-px"
        content=""
        mark="left-[19px] w-[414px]"
      />
      <ConfirmDialog
        prefix="b"
        selected="comprador"
        frame="left-[620px] top-[260px] w-[505px] border-l border-t-[3px] border-r-[4px] border-[#b4b4b4] pl-px pt-px"
        body="h-[488px] pt-px"
        content="pt-[23px]"
        mark="left-5 w-[407px]"
      />
    </div>
  );
}
